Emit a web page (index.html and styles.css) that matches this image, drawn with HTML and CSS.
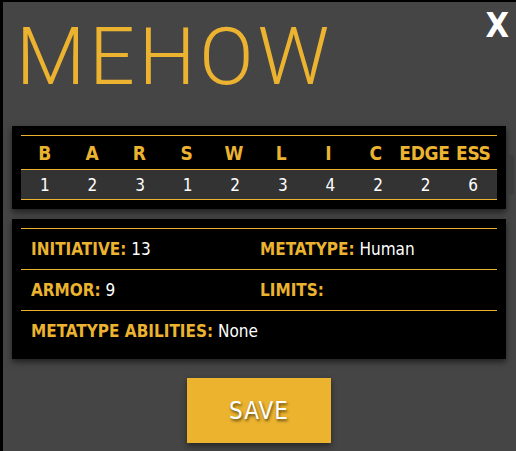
FILE: index.html
```html
<!DOCTYPE html>
<html>
<head>
<meta charset="utf-8">
<link rel="stylesheet" href="styles.css">
</head>
<body>
<div class="modal">
  <div class="head">
    <h1 class="title">MEHOW</h1>
    <span class="close">X</span>
  </div>
  <div class="panel stats">
    <div class="row hdr">
      <span>B</span><span>A</span><span>R</span><span>S</span><span>W</span><span>L</span><span>I</span><span>C</span><span>EDGE</span><span>ESS</span>
    </div>
    <div class="row vals">
      <span>1</span><span>2</span><span>3</span><span>1</span><span>2</span><span>3</span><span>4</span><span>2</span><span>2</span><span>6</span>
    </div>
  </div>
  <div class="panel info">
    <div class="irow">
      <div class="cell"><b>INITIATIVE:</b> 13</div>
      <div class="cell"><b>METATYPE:</b> Human</div>
    </div>
    <div class="irow">
      <div class="cell"><b>ARMOR:</b> 9</div>
      <div class="cell"><b>LIMITS:</b></div>
    </div>
    <div class="irow last">
      <div class="cell"><b>METATYPE ABILITIES:</b> None</div>
    </div>
  </div>
  <div class="actions">
    <button class="save">SAVE</button>
  </div>
  <div class="scrollhint"></div>
</div>
</body>
</html>
```
FILE: styles.css
```css
html, body {
  margin: 0;
  padding: 0;
  background: #000;
  height: 100%;
  overflow: hidden;
}
.modal {
  position: relative;
  margin: 2px 0 0 3px;
  height: 449px;
  background: #454545;
  font-family: "DejaVu Sans Condensed", "DejaVu Sans", sans-serif;
  font-stretch: condensed;
  box-sizing: border-box;
  padding: 0 10px 0 9px;
}
.head {
  position: relative;
  height: 124px;
}
.title {
  margin: 0;
  padding-top: 10px;
  padding-left: 4px;
  font-family: Roboto, "Liberation Sans", sans-serif;
  font-stretch: normal;
  font-weight: 300;
  font-size: 80px;
  line-height: 90px;
  letter-spacing: 4px;
  color: #ebb32f;
}
.close {
  position: absolute;
  right: -3px;
  top: 4px;
  color: #fff;
  font-family: "DejaVu Sans", sans-serif;
  font-weight: bold;
  font-size: 34px;
  line-height: 38px;
}
.panel {
  background: #000;
  padding: 9px;
  box-shadow: 0 3px 6px rgba(0,0,0,0.55);
}
.row {
  display: grid;
  grid-template-columns: repeat(10, 1fr);
  border-top: 1px solid #ebb32f;
  text-align: center;
}
.row span {
  display: block;
  white-space: nowrap;
}
.hdr {
  height: 33px;
  align-items: center;
  color: #ebb32f;
  font-weight: bold;
  font-size: 19px;
  letter-spacing: -0.3px;
}
.vals {
  height: 29px;
  align-items: center;
  background: #333;
  border-bottom: 1px solid #ebb32f;
  color: #fff;
  font-size: 17px;
}
.info {
  margin-top: 10px;
  padding-bottom: 0;
}
.irow {
  display: grid;
  grid-template-columns: 229px 1fr;
  border-top: 1px solid #ebb32f;
  height: 40px;
  align-items: center;
  padding-left: 10px;
}
.irow.last {
  height: 48px;
  align-items: start;
}
.irow.last .cell {
  padding-top: 10px;
}
.cell {
  color: #fff;
  font-size: 17px;
  white-space: nowrap;
}
.cell b {
  color: #ebb32f;
}
.actions {
  display: flex;
  justify-content: center;
  padding-top: 19px;
}
.save {
  width: 144px;
  height: 65px;
  border: none;
  background: #ecb32f;
  color: #fff;
  font-family: "DejaVu Sans Condensed", "DejaVu Sans", sans-serif;
  font-stretch: condensed;
  font-size: 24px;
  letter-spacing: 1px;
  text-shadow: 1px 2px 3px rgba(0,0,0,0.6);
  box-shadow: 0 3px 6px rgba(0,0,0,0.45);
  cursor: pointer;
}
.scrollhint {
  position: absolute;
  right: 2px;
  top: 153px;
  width: 6px;
  height: 40px;
  border-radius: 3px;
  background: #3c3c3c;
}
```
